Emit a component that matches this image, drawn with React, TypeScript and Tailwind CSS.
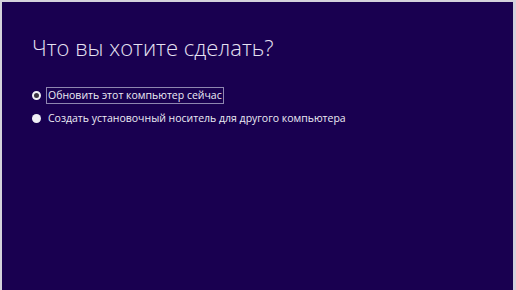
export default function App() {
  return (
    <div className="w-[516px] h-[290px] bg-[#d4d2dc] pt-[2px] pl-[2px] pr-[3px]">
      <div
        className="h-full bg-[#190050] text-white pl-[30px] pt-[30px]"
        style={{ fontFamily: '"Open Sans", "Noto Sans", sans-serif' }}
      >
        <h1 className="text-[22px] font-light leading-[30px] text-[#e6e2f2]">Что вы хотите сделать?</h1>
        <div className="mt-[25px] flex flex-col gap-[6px] text-[10.5px] text-[#ecebf4]">
          <div className="flex items-center gap-[5px]">
            <span className="w-[9px] h-[9px] rounded-full border-[2px] border-[#f0eff6] bg-[#3a3340]" />
            <span className="border border-[#8e86b0] px-[1px] leading-[15px]">Обновить этот компьютер сейчас</span>
          </div>
          <div className="flex items-center gap-[5px]">
            <span className="w-[9px] h-[9px] rounded-full bg-[#f0eff6]" />
            <span className="px-[2px] leading-[17px]">Создать установочный носитель для другого компьютера</span>
          </div>
        </div>
      </div>
    </div>
  )
}
